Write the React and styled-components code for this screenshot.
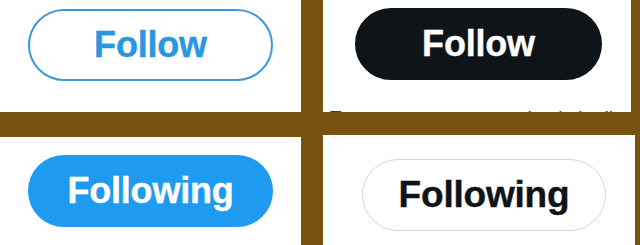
import styled, { createGlobalStyle, css } from "styled-components";

const GlobalStyle = createGlobalStyle`
  html, body {
    margin: 0;
    padding: 0;
    background: #77530f;
  }
  body {
    font-family: "Liberation Sans", Arial, sans-serif;
  }
`;

const Board = styled.div`
  width: 640px;
  height: 245px;
  display: grid;
  grid-template-columns: 301px 312px;
  grid-template-rows: 112px 110px;
  column-gap: 22px;
  row-gap: 23px;
  overflow: hidden;
  background: #77530f;
`;

const Panel = styled.div`
  position: relative;
  background: #ffffff;
  width: ${({ $w }) => $w}px;
  height: ${({ $h }) => $h}px;
  align-self: end;
  padding: ${({ $pad }) => $pad};
  box-sizing: border-box;
  overflow: hidden;
`;

const variants = {
  outline: css`
    background: #ffffff;
    color: #2a96df;
    border: 2px solid #3b99d8;
  `,
  dark: css`
    background: #0f1419;
    color: #ffffff;
    border: 2px solid #0f1419;
  `,
  filled: css`
    background: #1e9bf0;
    color: #ffffff;
    border: 2px solid #1e9bf0;
  `,
  ghost: css`
    background: #ffffff;
    color: #0f1419;
    border: 1.5px solid #cfd9de;
  `,
};

const PillButton = styled.button`
  display: flex;
  align-items: center;
  justify-content: center;
  width: ${({ $w }) => $w || 245}px;
  height: 72px;
  border-radius: 36px;
  box-sizing: border-box;
  padding: 0 0 ${({ $lift }) => $lift || 0}px;
  font-family: "Liberation Sans", Arial, sans-serif;
  font-weight: 700;
  font-size: ${({ $size }) => $size || 36}px;
  letter-spacing: -0.2px;
  -webkit-text-stroke: 0.4px currentColor;
  cursor: pointer;
  ${({ $variant }) => variants[$variant]}
`;

// the line below the button is cut by the frame: only its top shows
const CutCaption = styled.p`
  position: absolute;
  left: 7px;
  top: 107px;
  margin: 0;
  font-size: 19px;
  line-height: 22px;
  color: #3a3f44;
  white-space: nowrap;
`;

export default function App() {
  return (
    <>
      <GlobalStyle />
      <Board>
        <Panel $w={301} $h={112} $pad="9px 0 0 28px">
          <PillButton $variant="outline">Follow</PillButton>
        </Panel>
        <Panel $w={308} $h={112} $pad="8px 0 0 32px">
          <PillButton $variant="dark" $w={247}>
            Follow
          </PillButton>
          <CutCaption>To manage someone, check the list for them</CutCaption>
        </Panel>
        <Panel $w={301} $h={108} $pad="18px 0 0 28px">
          <PillButton $variant="filled" $lift={1}>
            Following
          </PillButton>
        </Panel>
        <Panel $w={312} $h={110} $pad="24px 0 0 39px">
          <PillButton $variant="ghost" $w={244} $size={37}>
            Following
          </PillButton>
        </Panel>
      </Board>
    </>
  );
}
